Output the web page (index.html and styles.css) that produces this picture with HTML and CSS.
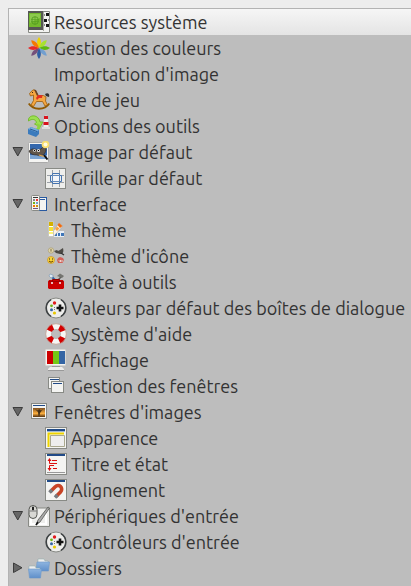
FILE: index.html
```html
<!DOCTYPE html>
<html lang="fr">
<head>
<meta charset="utf-8">
<meta name="viewport" content="width=device-width, initial-scale=1">
<title>Préférences</title>
<link rel="stylesheet" href="styles.css">
</head>
<body>
<svg class="defs" aria-hidden="true">
  <defs>
    <symbol id="open" viewBox="0 0 12 12"><path d="M1 1.5H10.500L5.750 10Z" fill="#666" stroke="#3c3c3c" stroke-linejoin="round"/></symbol>
    <symbol id="closed" viewBox="0 0 12 12"><path d="M1.5 1V10.500L10 5.750Z" fill="#666" stroke="#3c3c3c" stroke-linejoin="round"/></symbol>
    <symbol id="pad" viewBox="0 0 22 22">
      <circle cx="11" cy="11" r="10" fill="#eeeeec" stroke="#888a85"/>
      <path d="M6 2.6A9.8 9.8 0 0 0 6 19.4M16 2.6A9.8 9.8 0 0 1 16 19.4" fill="none" stroke="#3e4244" stroke-width="1.600"/>
      <path d="M15 7.500V14.500M11.500 11H18.500" stroke="#111" stroke-width="2.600"/>
      <circle cx="9.500" cy="6" r="1.700" fill="#e01b1b"/><circle cx="6.500" cy="8.800" r="1.400" fill="#73b216"/>
      <circle cx="6.500" cy="12.800" r="1.500" fill="#3465a4"/><circle cx="9.500" cy="16" r="1.600" fill="#e8c800"/>
      <path d="M9 10.500h1M9 12.500h1" stroke="#777"/>
    </symbol>
    <path id="petal" d="M11 11C8.500 6.500 8.500 3.500 11 0C13.500 3.500 13.500 6.500 11 11Z"/>
    <linearGradient id="folder" x2="0" y2="1"><stop stop-color="#8fb5e0"/><stop offset="1" stop-color="#5f8fca"/></linearGradient>
    <linearGradient id="sunset" x2="0" y2="1"><stop stop-color="#805020"/><stop offset=".6" stop-color="#fcaf3e"/><stop offset="1" stop-color="#503010"/></linearGradient>
  </defs>
</svg>
<nav class="panel" aria-label="Catégories">
  <ul class="tree">
    <li><a class="row selected" href="#ressources">
      <svg class="icon" viewBox="0 0 22 22"><path d="M.5.5H21.500V21.500H.5Z" fill="#f3f3f1" stroke="#888a85"/><path d="M0 0H15V19H0Z" fill="#555753"/><path d="M1 2H13V16H1Z" fill="#73b82c"/><path d="M2 3H12V7L2 12Z" fill="#8cc94d"/><rect x="4" y="6" width="6" height="7" rx="2" fill="none" stroke="#4f9620" stroke-width=".8"/><path d="M3 8.500H11M3 10.500H11M7 5V14" stroke="#559e20" stroke-width=".6"/><path d="M15.500 1V20" stroke="#a8a8a4"/><path d="M18 2h3v3h-3zM16 8h3v3h-3zM18 13h3v3h-3z" fill="#151515"/><path d="M16 4h1M20 9h1M16 14h1" stroke="#888" stroke-width="2"/></svg>
      <span>Resources système</span></a></li>
    <li><a class="row" href="#couleurs">
      <svg class="icon" viewBox="0 0 22 22"><use href="#petal" fill="#edd400"/><use href="#petal" fill="#a7e22e" transform="rotate(45 11 11)"/><use href="#petal" fill="#5eb80e" transform="rotate(90 11 11)"/><use href="#petal" fill="#729fcf" transform="rotate(135 11 11)"/><use href="#petal" fill="#2f5fa5" transform="rotate(180 11 11)"/><use href="#petal" fill="#75507b" transform="rotate(225 11 11)"/><use href="#petal" fill="#e92929" transform="rotate(270 11 11)"/><use href="#petal" fill="#f57900" transform="rotate(315 11 11)"/></svg>
      <span>Gestion des couleurs</span></a></li>
    <li><a class="row" href="#importation"><span class="icon"></span><span>Importation d'image</span></a></li>
    <li><a class="row" href="#jeu">
      <svg class="icon" viewBox="0 0 22 22"><path d="M.7 14.500C5 21.500 17 21.500 21.300 14.500" fill="none" stroke="#8f5902" stroke-width="1.800"/><path d="M17 5C20 3 22 5 21 8L18 7Z" fill="#333"/><path d="M1.500 4.500L5 .8L7.500 1.500L10 6.500H15.500L18 8L17.500 12L19.500 16L17 17L14.500 12.500H8.500L5.500 17.500L3 16L5.500 11.500L5.500 6L2.500 7Z" fill="#f5a742" stroke="#9b5c0a" stroke-width=".8" stroke-linejoin="round"/><path d="M6 .5L8 1L10.500 6L9 7Z" fill="#6b4423"/><path d="M10 6H14.500L14 9H11L9 11L8 9Z" fill="#e02f20"/><circle cx="4.500" cy="3.500" r=".5"/></svg>
      <span>Aire de jeu</span></a></li>
    <li><a class="row" href="#options">
      <svg class="icon" viewBox="0 0 22 22"><path d="M.5 4C2 0 8-.5 11 4L12 7H15L12 12L6.500 9L8.500 7.500C7.500 4 4 3.500 .5 6Z" fill="#9be052" stroke="#6bb51f" stroke-width=".8"/><path d="M9 10C12 10 12 13 8 15.500" fill="none" stroke="#8ed33f" stroke-width="3"/><path d="M16 1L18 0L20 1L21 13H15Z" fill="#eee" stroke="#aaa" stroke-width=".5"/><path d="M16 1H20V4H16ZM15.500 7H20.500V10H15.500Z" fill="#d9141e"/><path d="M14 12H22V14H14Z" fill="#ddd"/><path d="M0 14L3 12L11 15V19L8 22L0 19Z" fill="#3b7bbd"/><path d="M0 14L3 12L11 15L8 17Z" fill="#76aee0"/><path d="M2 14L9 16.500" stroke="#285b92"/></svg>
      <span>Options des outils</span></a></li>
    <li>
      <a class="row" href="#image"><svg class="arrow"><use href="#open"/></svg>
      <svg class="icon" viewBox="0 0 22 22"><rect x=".5" y="1.500" width="20" height="20" rx="1" fill="#f4f4f2" stroke="#aaa"/><path d="M2 3H19V18H2Z" fill="#3568ad"/><path d="M2 14H19V18H2Z" fill="#7ba4d3"/><path d="M1 10L4 8L7 8L9 9L13 8L17 4L18 9C17 14 13 16 9 14C5 14 2 13 1 10Z" fill="#61564a" stroke="#302b26" stroke-width=".7"/><circle cx="6.500" cy="9.500" r="1.300" fill="#fff"/><circle cx="10.500" cy="9.500" r="1.500" fill="#fff"/><circle cx="6.500" cy="9.500" r=".7"/><circle cx="10.500" cy="9.500" r=".7"/><path d="M11 14L16 15.500" stroke="#e9a544" stroke-width="1.300"/><path d="M16 14L19.500 18.500" stroke="#111" stroke-width="2"/><circle cx="17.500" cy="3.500" r="3.800" fill="#f8de70"/><circle cx="17.500" cy="3.500" r="2" fill="#fffce0"/></svg>
      <span>Image par défaut</span></a>
      <ul class="branch">
        <li><a class="row" href="#grille">
          <svg class="icon" viewBox="0 0 22 22"><rect x=".5" y="1.500" width="20" height="20" fill="#eeeeec" stroke="#888a85"/><path d="M7.500 3V20M14.500 3V20M2 8.500H19M2 15.500H19" stroke="#9a9fa5"/><path d="M7.500 6.500H14.500V8.500H16.500V14.500H14.500V16.500H7.500V14.500H5.500V8.500H7.500Z" fill="#eeeeec" stroke="#4574b0"/><path d="M7.500 8.500H14.500V14.500H7.500Z" fill="#f5f7fa" stroke="#6289bb"/></svg>
          <span>Grille par défaut</span></a></li>
      </ul>
    </li>
    <li>
      <a class="row" href="#interface"><svg class="arrow"><use href="#open"/></svg>
      <svg class="icon" viewBox="0 0 22 22"><rect x="8.500" y="4.500" width="10" height="13" fill="#f4f4f2" stroke="#2859a0"/><path d="M12 6.500H17" stroke="#2859a0"/><rect x="3.500" y="2.500" width="8" height="15" rx="1" fill="#f4f4f2" stroke="#888a85"/><path d="M5 4.500H10" stroke="#333"/><path d="M5 6h2v2H5z" fill="#888"/><path d="M8 6h2v2H8z" fill="#e33"/><path d="M5 9h2v2H5z" fill="#73b216"/><path d="M8 9h2v2H8z" fill="#729fcf"/><path d="M5 12h2v2H5z" fill="#f57900"/><path d="M8 12h2v2H8z" fill="#c99410"/><path d="M5 15h5v1H5z" fill="#75507b"/></svg>
      <span>Interface</span></a>
      <ul class="branch">
        <li><a class="row" href="#theme">
          <svg class="icon" viewBox="0 0 22 22"><path d="M8 12H19V18H6Z" fill="#e8eef5"/><path d="M10 14h2v3h-2zM13 14h2v3h-2zM16 14h3v3h-3z" fill="#3f76b8"/><path d="M7 14L14 4L18 7L9 17Z" fill="#fff4e4" stroke="#999" stroke-width=".5"/><path d="M12.500 6L14 4L17.500 7L15 9Z" fill="#ed6a10"/><path d="M10 10L12 7.500L14.500 9.500L12 12Z" fill="#f6a345"/><rect x="3.500" y="2.500" width="5" height="15" fill="#fff" stroke="#c8c8c0"/><path d="M4 3h4v4H4z" fill="#d4b000"/><path d="M4 8h4v4H4z" fill="#f5df32"/><path d="M4 13h4v2H4z" fill="#fff47a"/></svg>
          <span>Thème</span></a></li>
        <li><a class="row" href="#icone">
          <svg class="icon" viewBox="0 0 22 22"><circle cx="6" cy="5.500" r="2.700" fill="#e1d6ac" stroke="#a89b70" stroke-width=".7"/><path d="M5 5H7M6 4V7" stroke="#8a7c4e" stroke-width=".7"/><path d="M9 6L12 5L13 6L15 5L18 3C19 7 18 9 15 9L11 8Z" fill="#4d4a45"/><path d="M16 8L19 10" stroke="#333" stroke-width="1.300"/><circle cx="6" cy="15" r="3.500" fill="#f9d43b" stroke="#c58a18" stroke-width=".6"/><path d="M4 16Q6 18.500 8 16" fill="none" stroke="#613c00"/><path d="M4.500 13.500V14.500M7.500 13.500V14.500" stroke="#222"/><path d="M12 15L13 13L15 12L18 13L19 15L17.500 18H13Z" fill="#d66158"/><path d="M13 15H18V17H14Z" fill="#f6d0c8"/><path d="M14 15V17M17 15V17" stroke="#963830" stroke-width=".7"/></svg>
          <span>Thème d'icône</span></a></li>
        <li><a class="row" href="#boite">
          <svg class="icon" viewBox="0 0 22 22"><path d="M6 5L11 10" stroke="#3465a4" stroke-width="2"/><path d="M5 3L8 4L8 6L6 7L4 5Z" fill="#dce7f2" stroke="#7893af" stroke-width=".6"/><path d="M12 10L17 5" stroke="#555" stroke-width="1.500"/><path d="M12 5L15 2.500L19 5L17 7Z" fill="#74746f"/><path d="M4 9H18L19 11V17L18 18H4L3 17V11Z" fill="#cc0000"/><path d="M3.500 10.500H18.500" stroke="#a30000"/><path d="M7.500 10V8.500H14.500V10" fill="none" stroke="#900000"/><path d="M6 11h2v2H6zM14 11h2v2h-2z" fill="#e8bcbc"/></svg>
          <span>Boîte à outils</span></a></li>
        <li><a class="row" href="#dialogues"><svg class="icon"><use href="#pad"/></svg><span>Valeurs par défaut des boîtes de dialogue</span></a></li>
        <li><a class="row" href="#aide">
          <svg class="icon" viewBox="0 0 22 22"><circle cx="11" cy="11" r="7.500" fill="none" stroke="#f6f6f4" stroke-width="6"/><circle cx="11" cy="11" r="7.500" fill="none" stroke="#d40000" stroke-width="6" stroke-dasharray="5.280 6.500" stroke-dashoffset="-3.250"/><circle cx="11" cy="11" r="10.300" fill="none" stroke="#b88e80" stroke-width=".7"/><circle cx="11" cy="11" r="4.500" fill="none" stroke="#aaa29d" stroke-width=".7"/></svg>
          <span>Système d'aide</span></a></li>
        <li><a class="row" href="#affichage">
          <svg class="icon" viewBox="0 0 22 22"><rect x=".5" y=".5" width="20" height="16" rx="1" fill="#f4f4f2" stroke="#d8d8d4"/><path d="M2 2H8V15H2Z" fill="#cc0000"/><path d="M8 2H14V15H8Z" fill="#73c916"/><path d="M14 2H20V15H14Z" fill="#3465a4"/><path d="M8 17H14V18H17L19 20V21H3V20L5 18H8Z" fill="#eeeeec"/><path d="M7 17.500H15M3 21.500H19" stroke="#999"/></svg>
          <span>Affichage</span></a></li>
        <li><a class="row" href="#fenetres">
          <svg class="icon" viewBox="0 0 22 22"><rect x="3.500" y="2.500" width="11" height="11" fill="#f4f4f2" stroke="#888a85"/><path d="M5 4.500H14" stroke="#204a87"/><rect x="6.500" y="6.500" width="12" height="11" fill="#f4f4f2" stroke="#888a85"/><path d="M8 8.500H17" stroke="#204a87"/></svg>
          <span>Gestion des fenêtres</span></a></li>
      </ul>
    </li>
    <li>
      <a class="row" href="#images"><svg class="arrow"><use href="#open"/></svg>
      <svg class="icon" viewBox="0 0 22 22"><rect x="3.500" y="2.500" width="15" height="15" fill="#f4f4f2" stroke="#888a85"/><path d="M5 4.500H17" stroke="#204a87"/><path d="M5 7H17V16H5Z" fill="url(#sunset)"/><path d="M7 8L10 9.500L11 8L13 9.500L15 8L12 12L11.500 15H10.500L10 11Z" fill="#443015"/></svg>
      <span>Fenêtres d'images</span></a>
      <ul class="branch">
        <li><a class="row" href="#apparence">
          <svg class="icon" viewBox="0 0 22 22"><rect x=".5" y=".5" width="21" height="21" fill="#f4f4f2" stroke="#888a85"/><path d="M2 3H20" stroke="#204a87" stroke-width="2"/><path d="M2 4.500H20" stroke="#a0b8d6"/><path d="M3.500 20V6.500H19" fill="none" stroke="#edd400" stroke-width="2"/><path d="M5.500 19.500V8.500H19.500V19.500Z" fill="#eee" stroke="#aaa98f"/></svg>
          <span>Apparence</span></a></li>
        <li><a class="row" href="#titre">
          <svg class="icon" viewBox="0 0 22 22"><rect x=".5" y=".5" width="21" height="21" fill="#f4f4f2" stroke="#888a85"/><path d="M2 2H20" stroke="#204a87" stroke-width="2"/><path d="M2 19.500H20" stroke="#999"/><path d="M12 10.500H4.500V6M9 12.500H4.500V17M7 7.500H12M8 15.500H12" fill="none" stroke="#dc1010"/><path d="M2.500 8L4.500 5L6.500 8ZM2.500 15L4.500 18L6.500 15Z" fill="#dc1010"/></svg>
          <span>Titre et état</span></a></li>
        <li><a class="row" href="#alignement">
          <svg class="icon" viewBox="0 0 22 22"><rect x=".5" y=".5" width="21" height="21" fill="#f4f4f2" stroke="#888a85"/><path d="M2 2H20" stroke="#204a87" stroke-width="2"/><path d="M5.500 12.500L10 8C14 4 19 9 15.500 13L11 17.500" fill="none" stroke="#c84426" stroke-width="3.600"/><path d="M4.500 13.500L7 11M10 18.500L12.500 16" stroke="#777b80" stroke-width="3.600"/></svg>
          <span>Alignement</span></a></li>
      </ul>
    </li>
    <li>
      <a class="row" href="#peripheriques"><svg class="arrow"><use href="#open"/></svg>
      <svg class="icon" viewBox="0 0 22 22"><path d="M2 3H21.500V21.500H.5V13Z" fill="#eeeeec" stroke="#888a85"/><path d="M3 11V19H18V6" fill="none" stroke="#fff" stroke-width="2"/><path d="M8 20L10 15L20 2L21.500 3L12 17Z" fill="#aaa" stroke="#555753" stroke-width=".8"/><path d="M8 20L10 17" stroke="#111" stroke-width="1.500"/><rect x="1" y=".5" width="8" height="13" rx="4" fill="#d8d8d4" stroke="#555753"/><path d="M1.500 6H8.500M5 1V6" stroke="#777"/><path d="M5 2V5" stroke="#222" stroke-width="2"/></svg>
      <span>Périphériques d'entrée</span></a>
      <ul class="branch">
        <li><a class="row" href="#controleurs"><svg class="icon"><use href="#pad"/></svg><span>Contrôleurs d'entrée</span></a></li>
      </ul>
    </li>
    <li><a class="row" href="#dossiers"><svg class="arrow"><use href="#closed"/></svg>
      <svg class="icon" viewBox="0 0 22 22"><path d="M10 2H16L17 4H20V8H10Z" fill="#eee" stroke="#8aa" stroke-width=".5"/><path d="M9 5H21.500L20.500 14H8Z" fill="url(#folder)" stroke="#6d98ca" stroke-width=".6"/><path d="M1 9H7L8 11H12V14H1Z" fill="#eee" stroke="#8aa" stroke-width=".5"/><path d="M.5 12H13.500L12.500 21H1.500Z" fill="url(#folder)" stroke="#6d98ca" stroke-width=".6"/></svg>
      <span>Dossiers</span></a></li>
  </ul>
</nav>
</body>
</html>
```
FILE: styles.css
```css
* {
  box-sizing: border-box;
}

body {
  margin: 0;
  padding: 8px 0 0 8px;
  background: #ededed;
  color: #333;
  font: 18px/26px Ubuntu, "Noto Sans", sans-serif;
  overflow: hidden;
}

.defs {
  position: absolute;
  width: 0;
  height: 0;
}

.panel {
  min-height: calc(100vh - 8px);
  border: solid #b3b3b3;
  border-width: 1px 0 0 1px;
  background: #bdbdbd;
}

.tree,
.branch {
  margin: 0;
  padding: 0;
  list-style: none;
}

.branch {
  padding-left: 17px;
}

.row {
  display: grid;
  grid-template-columns: 12px 22px auto;
  column-gap: 4px;
  align-items: center;
  justify-content: start;
  height: 26px;
  padding-left: 3px;
  color: inherit;
  text-decoration: none;
  white-space: nowrap;
}

.selected {
  background: linear-gradient(#f6f6f6, #e4e4e4);
}

.arrow {
  grid-column: 1;
  width: 12px;
  height: 12px;
}

.icon {
  grid-column: 2;
  width: 22px;
  height: 22px;
}
```
